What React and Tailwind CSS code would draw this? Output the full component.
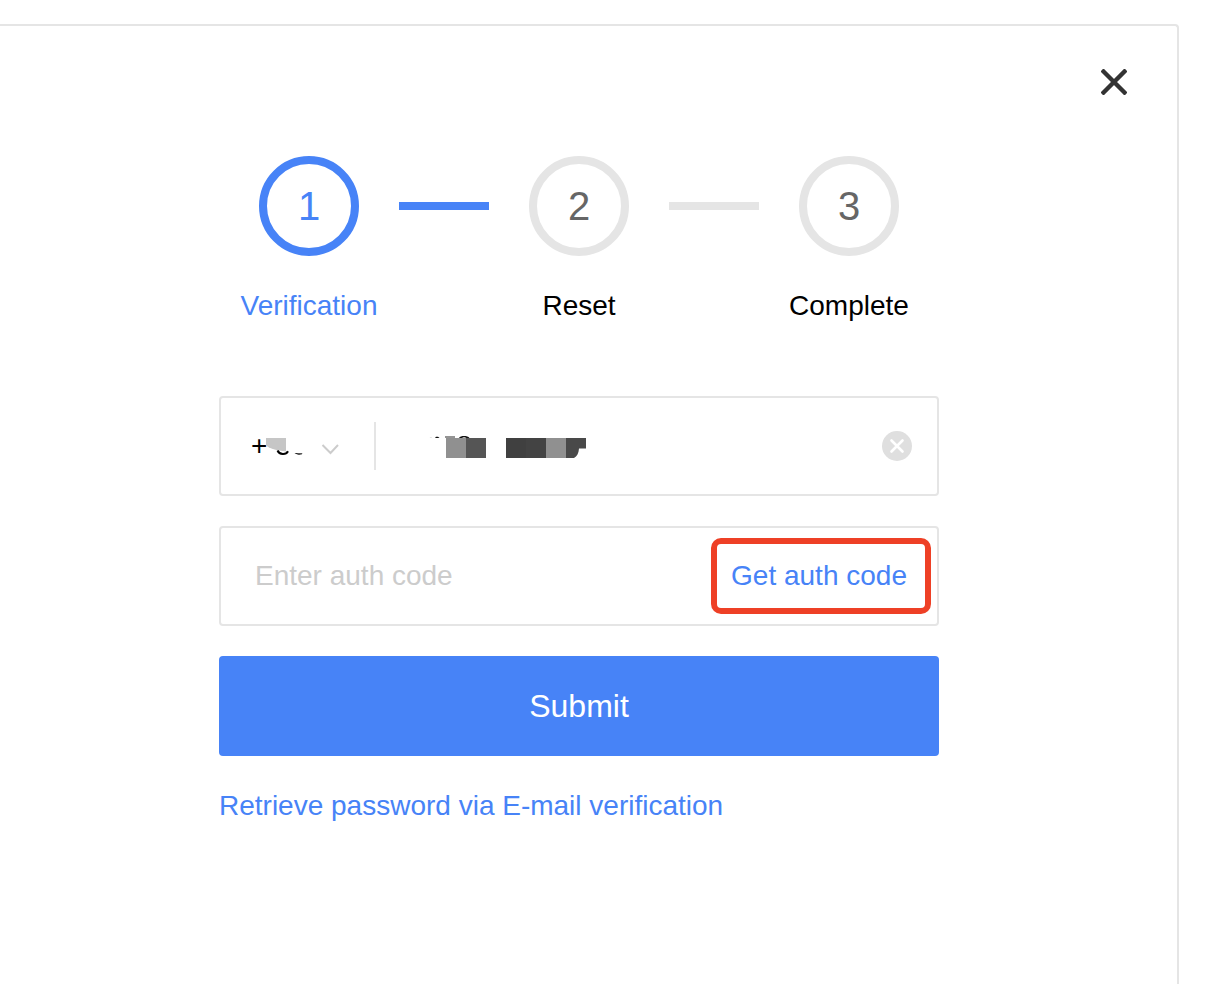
import { Fragment } from "react";

const steps = [
  { number: 1, label: "Verification", active: true },
  { number: 2, label: "Reset", active: false },
  { number: 3, label: "Complete", active: false },
];

function Steps() {
  return (
    <ol className="flex">
      {steps.map(({ number, label, active }, index) => (
        <Fragment key={number}>
          {index > 0 && (
            <li
              aria-hidden="true"
              className={
                index === 1
                  ? "mt-[46px] h-2 w-[90px] bg-[#4783f7]"
                  : "mt-[46px] h-2 w-[90px] bg-[#e5e5e5]"
              }
            />
          )}
          <li
            aria-current={active ? "step" : undefined}
            className="flex flex-1 flex-col items-center gap-[30px]"
          >
            <span
              className={
                active
                  ? "flex size-[100px] items-center justify-center rounded-full border-8 border-[#4783f7] text-[40px] leading-[40px] text-[#4783f7]"
                  : "flex size-[100px] items-center justify-center rounded-full border-8 border-[#e5e5e5] text-[40px] leading-[40px] text-[#666666]"
              }
            >
              {number}
            </span>
            <span className={active ? "text-[#4783f7]" : "text-black"}>{label}</span>
          </li>
        </Fragment>
      ))}
    </ol>
  );
}

function MaskedCode() {
  return (
    <svg
      aria-hidden="true"
      viewBox="0 0 40 20"
      className="pointer-events-none absolute top-[40px] left-[45px] h-5 w-10"
    >
      <path d="M0 0h20v13.500l-7-1c-5-1-9-2-13-5z" fill="#c6c6c6" />
      <path d="M11.500 12.500c2 4.600 8.500 4.600 10.500 .8" fill="none" stroke="#000" strokeWidth="2" />
      <path d="M28.500 15c2.500 0 5 .3 8 .3l-1 1.300c-2.500 .4-5 0-7-1.600z" fill="#222" />
    </svg>
  );
}

function MaskedNumber() {
  return (
    <svg
      aria-hidden="true"
      viewBox="0 0 160 24"
      className="pointer-events-none absolute top-[37px] left-[52px] h-6 w-40"
    >
      <path d="M1.500 3l2-.8v.8z" fill="#bbb" />
      <path d="M7 3l1-1.200h2l1.500 1.200z" fill="#111" />
      <path d="M17 1.300h10v1.400H17z" fill="#666" />
      <path d="M31 3c1.500-2.600 8.500-2.600 10.500 0h-3c-1.500-.9-3.500-.9-4.500 0z" fill="#111" />
      <path d="M18 3h20v20H18z" fill="#909090" />
      <path d="M38 3h20v20H38z" fill="#555555" />
      <path d="M78 3h20v20H78z" fill="#404040" />
      <path d="M98 3h20v20H98z" fill="#434343" />
      <path d="M118 3h20v20h-20z" fill="#909090" />
      <path d="M138 3h20v10.500h-7c-.3 4.500-2 8-5 9.500h-8z" fill="#494949" />
    </svg>
  );
}

export default function App() {
  return (
    <div className="min-h-screen bg-white pt-6 pr-[45px] font-['Liberation_Sans',Arial,sans-serif] text-[28px] leading-[40px]">
      <main className="min-h-[calc(100vh-24px)] rounded-tr border-t-2 border-r-2 border-[#e5e5e5] pb-16">
        <div className="flex justify-end pt-[31px] pr-[38px]">
          <button
            type="button"
            aria-label="Close"
            className="flex size-[50px] cursor-pointer items-center justify-center"
          >
            <svg viewBox="0 0 26 26" className="size-[26px]" aria-hidden="true">
              <path
                d="M2.500 2.500L23.500 23.500M23.500 2.500L2.500 23.500"
                fill="none"
                stroke="#333333"
                strokeWidth="4.400"
                strokeLinecap="square"
              />
            </svg>
          </button>
        </div>

        <div className="pt-[49px] pr-[19px]">
          <form
            className="mx-auto w-full max-w-[720px]"
            onSubmit={(event) => event.preventDefault()}
          >
            <Steps />

            <div className="mt-[70px] flex h-[100px] items-center rounded border-2 border-[#e5e5e5]">
              <div className="relative flex h-full w-[153px] items-center">
                <select
                  aria-label="Country code"
                  className="h-full w-full appearance-none bg-transparent pl-[30px] text-black outline-none"
                >
                  <option>+</option>
                </select>
                <MaskedCode />
                <svg
                  aria-hidden="true"
                  viewBox="0 0 18 12"
                  className="pointer-events-none absolute top-[45px] right-[35px] h-3 w-[18px]"
                >
                  <path d="M1.500 2L9.500 10L17 2" fill="none" stroke="#cccccc" strokeWidth="2" />
                </svg>
              </div>
              <div className="h-12 w-[2px] bg-[#e5e5e5]" />
              <div className="relative h-full min-w-0 flex-1">
                <input
                  type="tel"
                  aria-label="Phone number"
                  className="h-full w-full bg-transparent pl-[52px] text-black outline-none"
                />
                <MaskedNumber />
              </div>
              <button
                type="button"
                aria-label="Clear phone number"
                className="mr-[25px] size-[30px] cursor-pointer"
              >
                <svg viewBox="0 0 30 30" className="size-[30px]" aria-hidden="true">
                  <circle cx="15" cy="15" r="15" fill="#dfdfdf" />
                  <path
                    d="M9.500 9.500L20.500 20.500M20.500 9.500L9.500 20.500"
                    fill="none"
                    stroke="#ffffff"
                    strokeWidth="2.600"
                    strokeLinecap="round"
                  />
                </svg>
              </button>
            </div>

            <div className="mt-[30px] flex h-[100px] items-center rounded border-2 border-[#e5e5e5] pr-[6px]">
              <input
                type="text"
                aria-label="Auth code"
                placeholder="Enter auth code"
                className="h-full min-w-0 flex-1 bg-transparent pl-[34px] text-black outline-none placeholder:text-[#cccccc]"
              />
              <button
                type="button"
                className="flex h-[76px] w-[220px] cursor-pointer items-center justify-center rounded-[10px] border-6 border-[#ee4026] pr-1 whitespace-nowrap text-[#4783f7]"
              >
                Get auth code
              </button>
            </div>

            <button
              type="submit"
              className="mt-[30px] h-[100px] w-full cursor-pointer rounded bg-[#4783f7] text-[32px] text-white"
            >
              Submit
            </button>

            <a href="#email" className="mt-[30px] inline-block text-[#4783f7]">
              Retrieve password via E-mail verification
            </a>
          </form>
        </div>
      </main>
    </div>
  );
}
